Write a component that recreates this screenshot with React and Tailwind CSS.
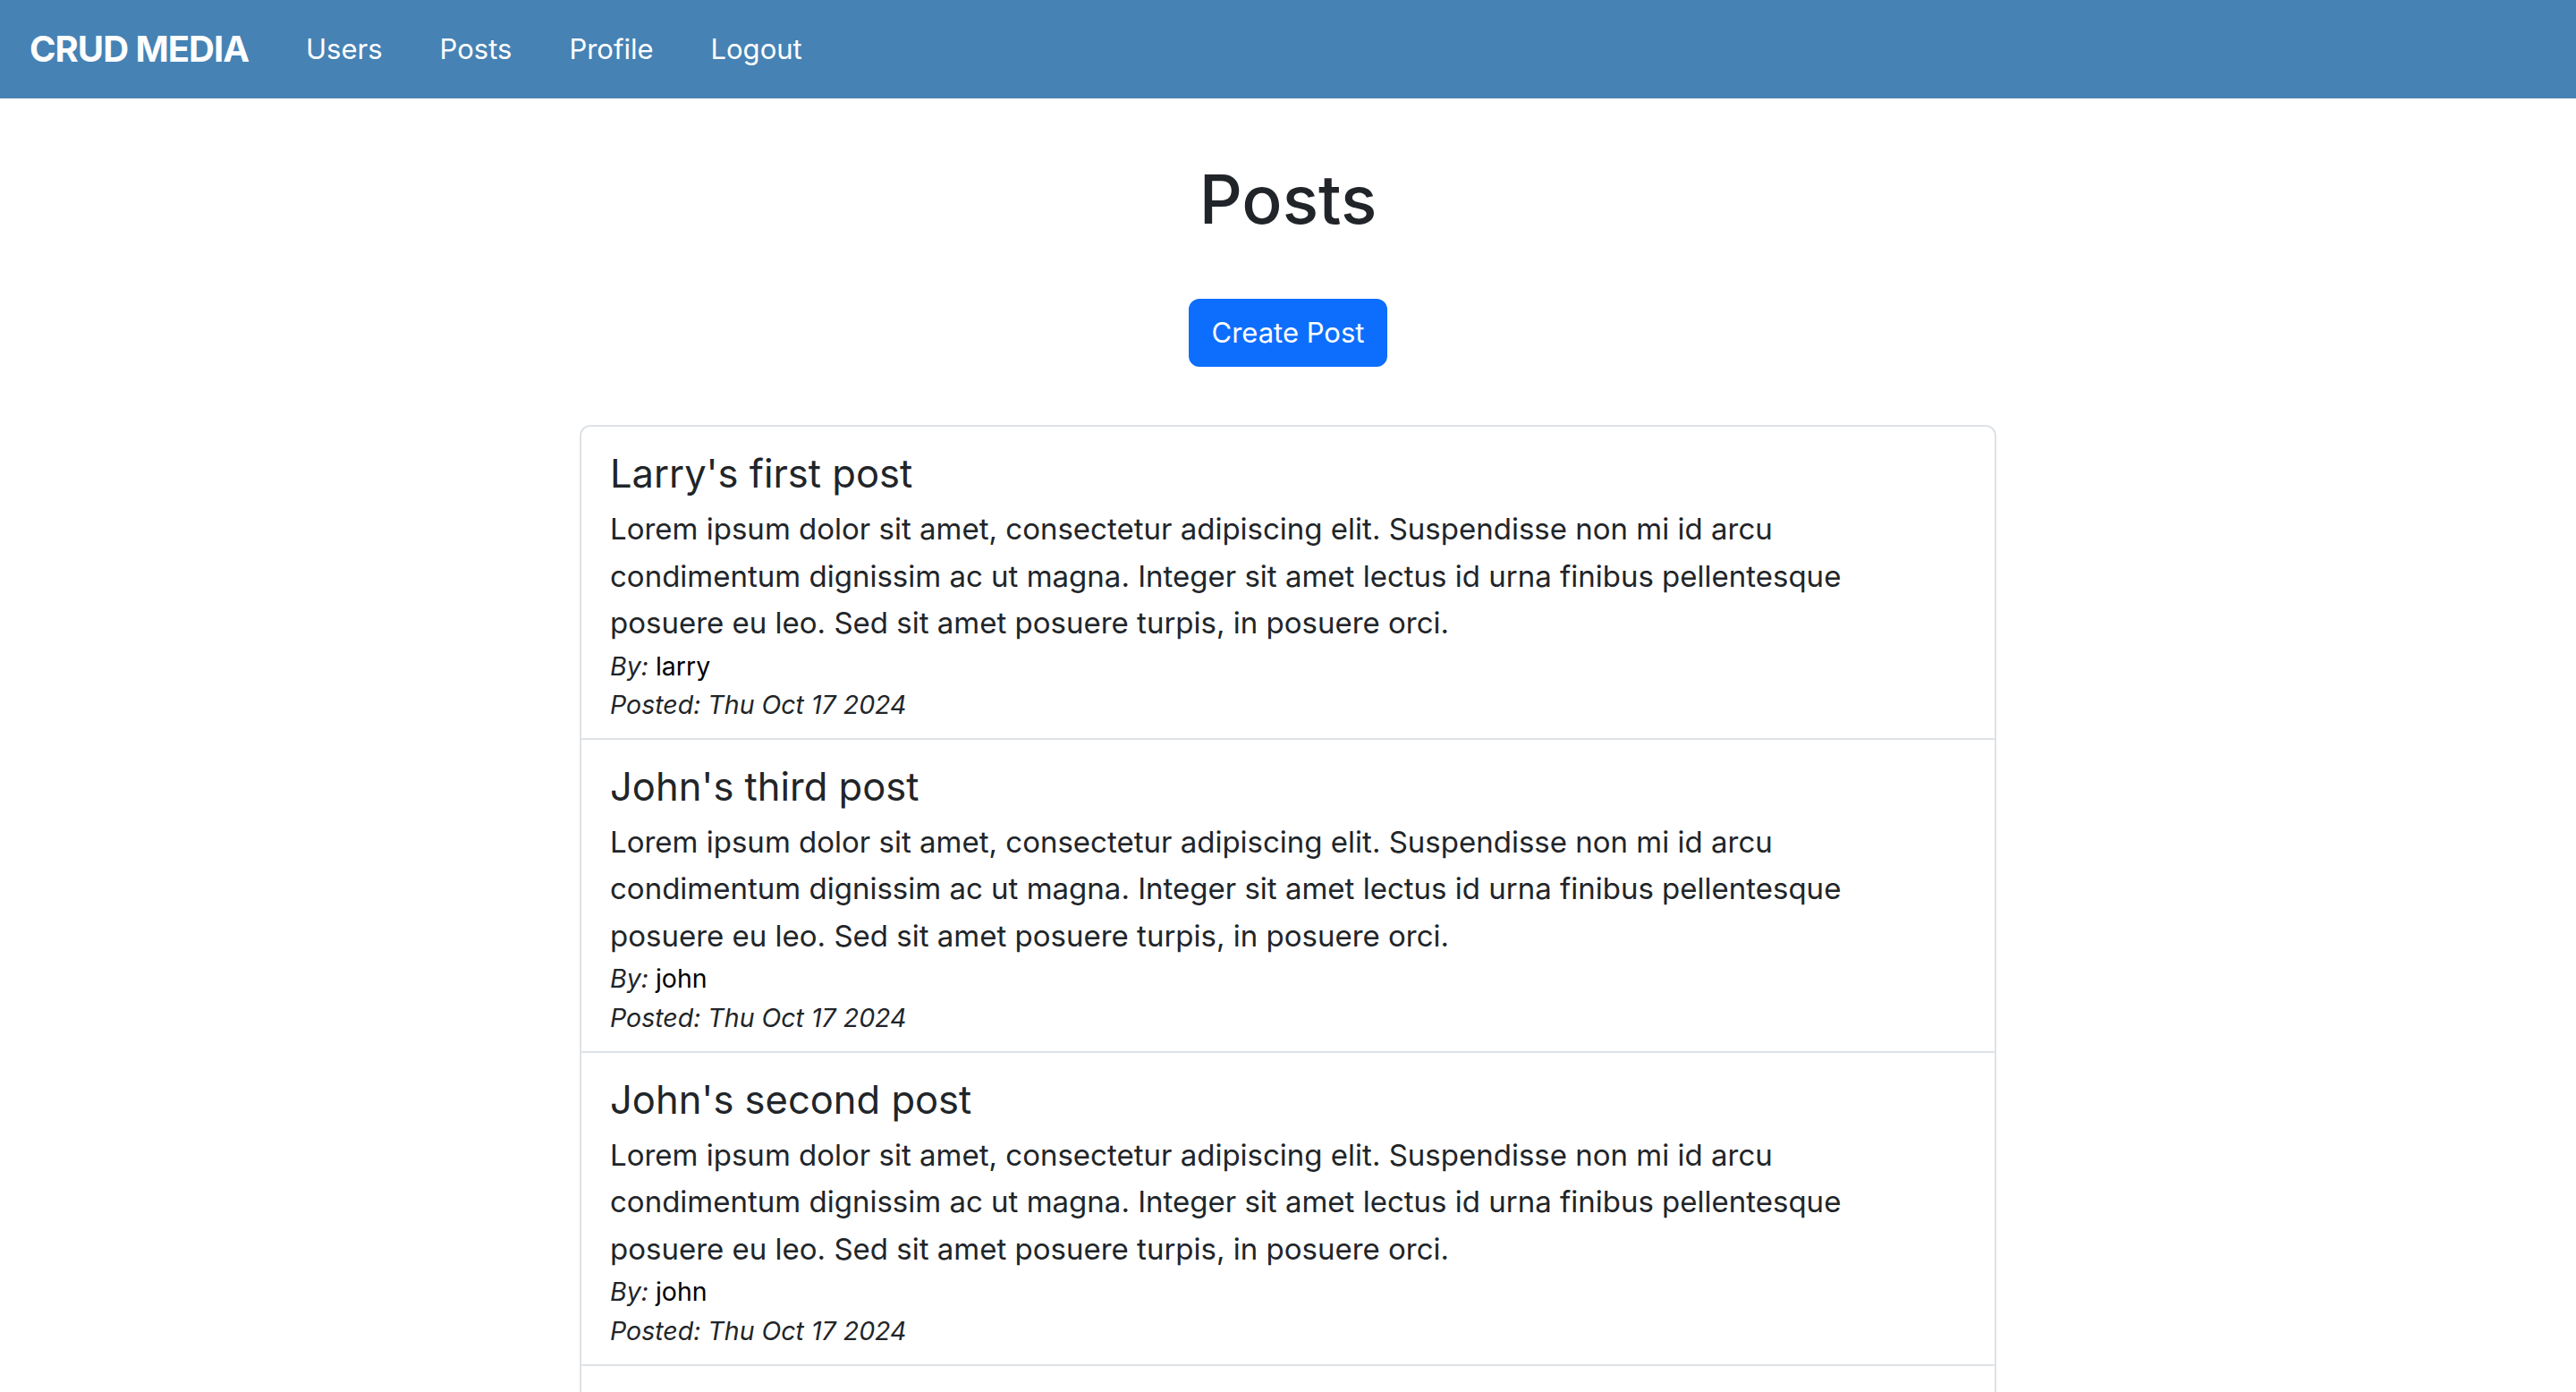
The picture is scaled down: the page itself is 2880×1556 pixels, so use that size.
import React from "react";

const lorem =
  "Lorem ipsum dolor sit amet, consectetur adipiscing elit. Suspendisse non mi id arcu condimentum dignissim ac ut magna. Integer sit amet lectus id urna finibus pellentesque posuere eu leo. Sed sit amet posuere turpis, in posuere orci.";

const posts = [
  { id: 1, title: "Larry's first post", author: "larry", date: "Thu Oct 17 2024" },
  { id: 2, title: "John's third post", author: "john", date: "Thu Oct 17 2024" },
  { id: 3, title: "John's second post", author: "john", date: "Thu Oct 17 2024" },
  { id: 4, title: "John's first post", author: "john", date: "Thu Oct 17 2024" },
];

function Navbar() {
  return (
    <nav className="flex h-[110px] items-center bg-[#4682b4] px-[33px]">
      <span className="mr-[32px] text-[40px] font-bold tracking-[-1px] text-white">
        CRUD MEDIA
      </span>
      {["Users", "Posts", "Profile", "Logout"].map((link) => (
        <a key={link} href="#" className="px-[32px] text-[31px] text-white">
          {link}
        </a>
      ))}
    </nav>
  );
}

export default function App() {
  return (
    <div
      className="min-h-screen bg-white text-[#212529]"
      style={{ fontFamily: "Inter, 'Noto Sans', sans-serif" }}
    >
      <Navbar />

      <main className="flex flex-col items-center">
        <h1 className="mt-[65px] text-[75px] font-medium leading-[96px]">Posts</h1>

        <button className="mt-[63px] h-[76px] rounded-[12px] border-2 border-[#0d6efd] bg-[#0d6efd] px-[24px] text-[31px] text-white">
          Create Post
        </button>

        {/* Posts list */}
        <div className="mt-[65px] w-[1584px] rounded-[12px] border-2 border-[#dee2e6]">
          {posts.map((post, i) => (
            <div
              key={post.id}
              className={`px-[32px] py-[16px] ${
                i < posts.length - 1 ? "border-b-2 border-[#dee2e6]" : ""
              }`}
            >
              <p className="text-[43.5px] leading-[72px]">{post.title}</p>
              <p className="pr-[24px] text-[33px] leading-[52.5px]">{lorem}</p>
              <p className="text-[28.5px] leading-[43.2px]">
                <em>By:</em> <span className="text-black">{post.author}</span>
              </p>
              <p className="text-[28.5px] italic leading-[43.2px]">Posted: {post.date}</p>
            </div>
          ))}
        </div>
      </main>
    </div>
  );
}
